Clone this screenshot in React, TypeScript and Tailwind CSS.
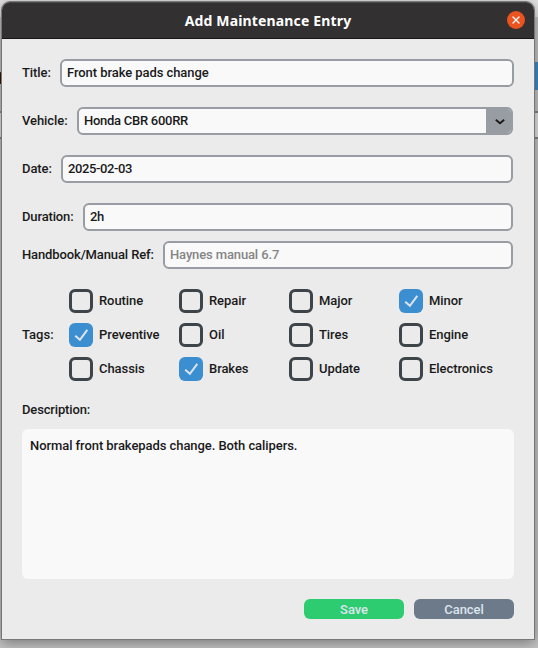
import { X } from "lucide-react";

type FieldProps = {
  label: string;
  labelClass: string;
  inputClass?: string;
  textClass?: string;
  value?: string;
  placeholder?: string;
};

function Field({ label, labelClass, inputClass = "mr-px", textClass = "", value, placeholder }: FieldProps) {
  return (
    <div className="flex h-7 items-center">
      <span className={`shrink-0 whitespace-nowrap ${labelClass}`}>{label}</span>
      <div
        className={`flex h-7 flex-1 items-center rounded-md border-2 border-[#979da2] bg-[#f9f9fa] pl-[5px] ${inputClass}`}
      >
        {value ? <span className={textClass}>{value}</span> : <span className={`text-[#858585] ${textClass}`}>{placeholder}</span>}
      </div>
    </div>
  );
}

const tags = [
  { name: "Routine", on: false },
  { name: "Repair", on: false },
  { name: "Major", on: false },
  { name: "Minor", on: true },
  { name: "Preventive", on: true },
  { name: "Oil", on: false },
  { name: "Tires", on: false },
  { name: "Engine", on: false },
  { name: "Chassis", on: false },
  { name: "Brakes", on: true },
  { name: "Update", on: false },
  { name: "Electronics", on: false },
];

function Tag({ name, on }: { name: string; on: boolean }) {
  return (
    <div className="flex h-6 items-center gap-1.5">
      {on ? (
        <span className="flex size-6 shrink-0 items-center justify-center rounded-md bg-[#3b8ed0]">
          <svg viewBox="0 0 24 24" className="size-6" fill="none" stroke="#dce4ee" strokeWidth="2">
            <path d="M6.2 12.8 L10.9 16.8 L18.3 6.8" />
          </svg>
        </span>
      ) : (
        <span className="size-6 shrink-0 rounded-md border-3 border-[#3e454a]" />
      )}
      <span>{name}</span>
    </div>
  );
}

function Backdrop() {
  return (
    <div className="absolute inset-0 bg-[#c5c5c5]">
      <div className="absolute inset-x-0 top-0 h-[17px] bg-[#e4e4e4]" />
      <div className="absolute top-[72px] -left-1 h-3 w-3 rounded-full bg-[#3a1400]" />
      <div className="absolute top-[62px] right-0 h-7 w-8 bg-[#3b8ed0]" />
      <div className="absolute inset-x-0 top-[111px] h-7 border-y-2 border-[#858585] bg-[#e4e4e4]" />
    </div>
  );
}

export default function App() {
  return (
    <div className="relative h-[648px] w-[538px] overflow-hidden font-['Roboto','Liberation_Sans',sans-serif] text-[13px] leading-4 font-medium tracking-[-0.07px] text-[#1a1a1a]">
      <Backdrop />
      <main className="absolute top-0.5 left-0.5 flex h-[637px] w-[532px] flex-col rounded-t-lg bg-[#ebebeb] shadow-[0_0_0_1px_#777777,0_3px_14px_1px_rgba(0,0,0,0.4)]">
        <header className="flex h-[37px] shrink-0 items-center rounded-t-lg border-t border-b border-t-[#4a4848] border-b-[#181617] bg-[#323030] pr-[9px] pl-[27px]">
          <h1 className="flex-1 text-center font-['Noto_Sans',sans-serif] text-[14px] font-bold tracking-[0.15px] text-white">
            Add Maintenance Entry
          </h1>
          <span className="-mt-px flex size-[18px] items-center justify-center rounded-full bg-[#e95420] text-white">
            <X size={12} strokeWidth={2.6} />
          </span>
        </header>
        <div className="flex flex-1 flex-col px-5 pt-5">
          <div className="flex flex-col gap-5">
            <Field label="Title:" labelClass="w-[38px]" inputClass="" value="Front brake pads change" />
            <div className="flex h-7 items-center">
              <span className="w-[55px] shrink-0">Vehicle:</span>
              <div className="mr-px flex h-7 flex-1 overflow-hidden rounded-md border-2 border-[#979da2] bg-[#f9f9fa]">
                <span className="flex flex-1 items-center pl-[5px] tracking-[-0.27px]">Honda CBR 600RR</span>
                <span className="flex w-[25px] items-center justify-center bg-[#979da2] pl-[3px]">
                  <svg viewBox="0 0 10 6" className="mt-0.5 h-1.5 w-2.5" fill="none" stroke="#1a1a1a" strokeWidth="1.8">
                    <path d="M0.8 0.8 L5 4.3 L9.2 0.8" />
                  </svg>
                </span>
              </div>
            </div>
            <Field label="Date:" labelClass="w-[39px]" textClass="tracking-[-0.4px]" value="2025-02-03" />
            <Field label="Duration:" labelClass="w-[61px] tracking-[-0.15px]" textClass="tracking-[-0.4px]" value="2h" />
          </div>
          <div className="mt-2.5">
            <Field
              label="Handbook/Manual Ref:"
              labelClass="w-[141px] tracking-[-0.12px]"
              textClass="tracking-[-0.13px]"
              placeholder="Haynes manual 6.7"
            />
          </div>
          <div className="mt-5 flex items-center">
            <span className="w-[47px] shrink-0 tracking-normal">Tags:</span>
            <div className="grid grid-cols-[repeat(4,110px)] gap-y-2.5">
              {tags.map((t) => (
                <Tag key={t.name} name={t.name} on={t.on} />
              ))}
            </div>
          </div>
          <div className="mt-[21px] tracking-[-0.15px]">Description:</div>
          <div className="mt-[11px] h-[150px] rounded-md bg-[#f9f9fa] px-2 py-[9px]">
            Normal front brakepads change. Both calipers.
          </div>
          <div className="mt-5 flex justify-end gap-2.5 text-[#dce4ee]">
            <button className="flex h-5 w-[100px] items-center justify-center rounded-md bg-[#2ecc71] pt-0.5">Save</button>
            <button className="flex h-5 w-[100px] items-center justify-center rounded-md bg-[#6c7a89] pt-0.5">Cancel</button>
          </div>
        </div>
      </main>
    </div>
  );
}
